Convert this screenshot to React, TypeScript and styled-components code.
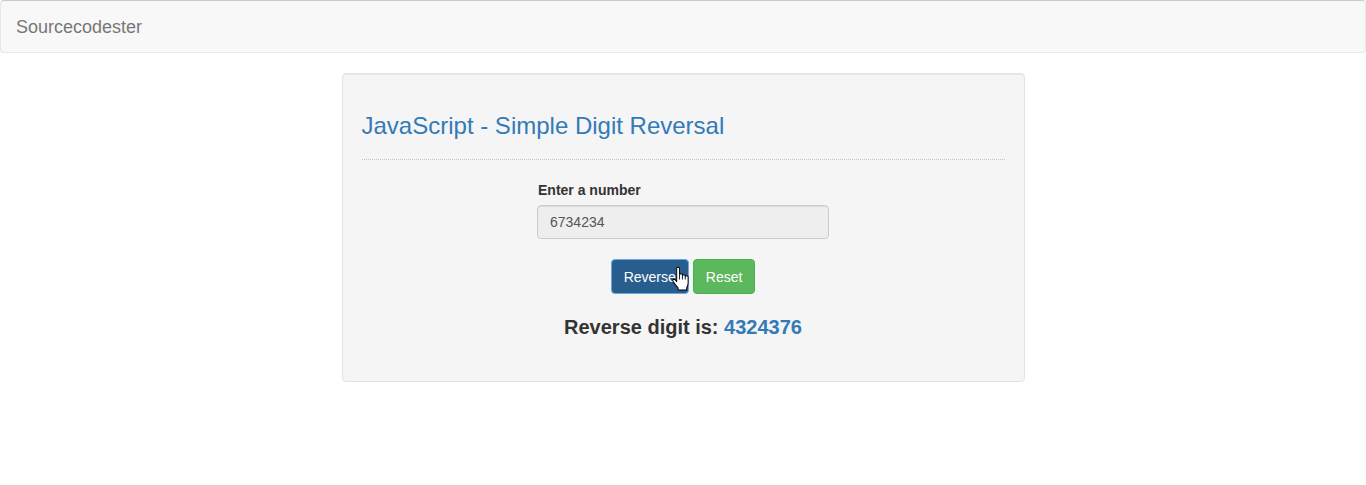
import React, { useState } from "react";
import styled, { createGlobalStyle } from "styled-components";

const GlobalStyle = createGlobalStyle`
  html, body {
    margin: 0;
    padding: 0;
    background: #fff;
  }
  body {
    font-family: "Liberation Sans", Arial, Helvetica, sans-serif;
    font-size: 14px;
    line-height: 1.42857;
    color: #333;
  }
  * { box-sizing: border-box; }
`;

const Navbar = styled.nav`
  height: 53px;
  margin-bottom: 20px;
  background: #f8f8f8;
  border: 1px solid #e7e7e7;
  border-top-color: #c9c9c9;
  border-radius: 4px;
  display: flex;
  align-items: center;
`;

const Brand = styled.a`
  padding: 0 15px;
  font-size: 18px;
  line-height: 20px;
  color: #777;
  text-decoration: none;
`;

const Well = styled.div`
  width: 683px;
  margin: 0 auto;
  padding: 19px;
  background: #f5f5f5;
  border: 1px solid #e3e3e3;
  border-radius: 4px;
  box-shadow: inset 0 1px 1px rgba(0, 0, 0, 0.05);
  display: flex;
  flex-direction: column;
`;

const Title = styled.h3`
  margin: 20px 0 0;
  font-size: 24px;
  font-weight: 500;
  line-height: 26px;
  color: #337ab7;
`;

const Rule = styled.hr`
  margin: 20px 0 0;
  border: 0;
  border-top: 1px dotted #c4c4c4;
  height: 0;
`;

const Form = styled.div`
  margin-top: 20px;
  width: 292px;
  align-self: center;
  display: flex;
  flex-direction: column;
`;

const Label = styled.label`
  font-weight: 700;
  line-height: 20px;
  margin-bottom: 5px;
  padding-left: 1px;
`;

const Input = styled.input`
  height: 34px;
  padding: 6px 12px;
  font-family: inherit;
  font-size: 14px;
  color: #555;
  background: #eee;
  border: 1px solid #ccc;
  border-radius: 4px;
  box-shadow: inset 0 1px 1px rgba(0, 0, 0, 0.075);
  outline: none;
`;

const ButtonRow = styled.div`
  margin-top: 20px;
  display: flex;
  justify-content: center;
  gap: 4px;
`;

const Button = styled.button<{ $variant: "primary" | "success"; $focused?: boolean }>`
  position: relative;
  height: 35px;
  padding: 6px 12px;
  font-family: inherit;
  font-size: 14px;
  line-height: 20px;
  color: #fff;
  border-radius: 4px;
  cursor: pointer;
  background: ${(p) => (p.$variant === "primary" ? "#285e8e" : "#5cb85c")};
  border: 1px solid
    ${(p) => (p.$variant === "primary" ? (p.$focused ? "#6fa6e0" : "#2e6da4") : "#4cae4c")};
`;

const Cursor = styled.svg`
  position: absolute;
  left: 59px;
  top: 6px;
  width: 19px;
  height: 25px;
  pointer-events: none;
`;

const Result = styled.h3`
  margin: 22px 0 24px;
  text-align: center;
  font-size: 20px;
  font-weight: 700;
  line-height: 22px;
  color: #333;
`;

const Value = styled.span`
  color: #337ab7;
`;

export default function App() {
  const [num, setNum] = useState("6734234");
  const [rev, setRev] = useState("4324376");

  return (
    <>
      <GlobalStyle />
      <Navbar>
        <Brand href="#">Sourcecodester</Brand>
      </Navbar>
      <Well>
        <Title>JavaScript - Simple Digit Reversal</Title>
        <Rule />
        <Form>
          <Label>Enter a number</Label>
          <Input value={num} onChange={(e) => setNum(e.target.value)} />
        </Form>
        <ButtonRow>
          <Button
            $variant="primary"
            $focused
            onClick={() => setRev(num.split("").reverse().join(""))}
          >
            Reverse
            <Cursor viewBox="0 0 20 24" preserveAspectRatio="none">
              <path
                d="M6,15 L6,2 Q7.5,0.4 9,2 L9,8 Q10.5,6.8 12,8 L12,9 Q13.5,7.8 15,9 L15,10 Q16.5,8.8 18,10 L18,16 Q18,19 16.5,21 L16.5,23 L7.5,23 L7.5,21 Q5,18.5 2.2,15 Q1.3,13.2 3,12.8 Q4.3,12.8 6,15 Z"
                fill="#fff"
                stroke="#000"
                strokeWidth="1"
                strokeLinejoin="round"
              />
              <path d="M9,8 L9,13 M12,9 L12,13 M15,10 L15,13" stroke="#000" strokeWidth="0.9" />
            </Cursor>
          </Button>
          <Button $variant="success" onClick={() => { setNum(""); setRev(""); }}>
            Reset
          </Button>
        </ButtonRow>
        <Result>
          Reverse digit is: <Value>{rev}</Value>
        </Result>
      </Well>
    </>
  );
}
